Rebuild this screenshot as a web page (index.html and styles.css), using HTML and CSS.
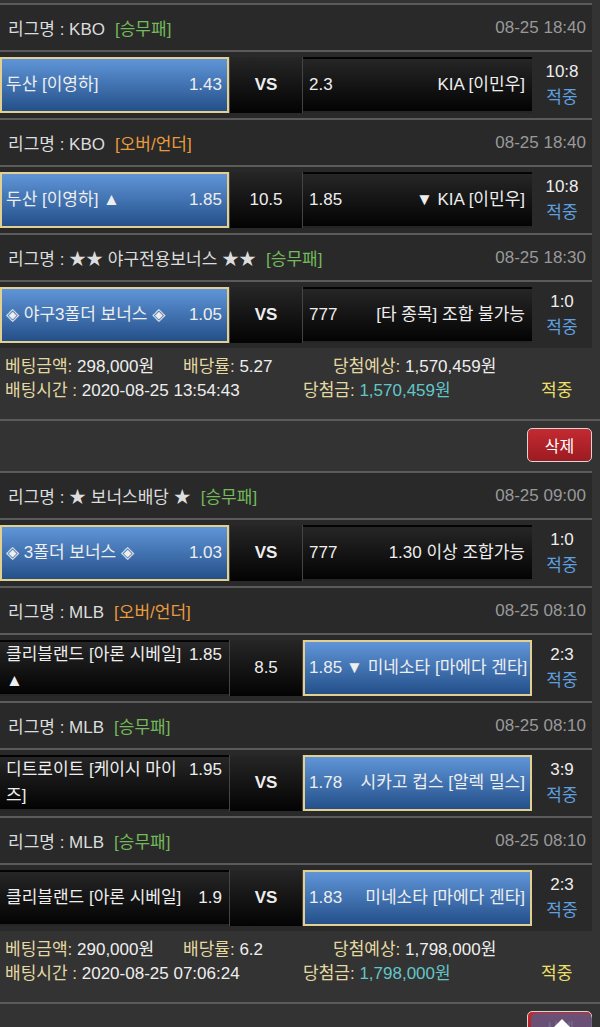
FILE: index.html
```html
<!DOCTYPE html>
<html lang="ko">
<head>
    <meta charset="UTF-8">
    <meta name="viewport" content="width=device-width, initial-scale=1.0">
    <title>베팅내역</title>
    <link rel="stylesheet" href="styles.css">
</head>
<body>
<div class="page">

    <!-- 첫번째 베팅 -->
    <div class="games">
        <div class="league">
            <span>리그명 : KBO<em class="type win">[승무패]</em></span>
            <span class="date">08-25 18:40</span>
        </div>
        <div class="match">
            <div class="pick home on"><div class="line"><span class="name">두산 [이영하]</span><span class="odd">1.43</span></div></div>
            <div class="mid vs">VS</div>
            <div class="pick away"><div class="line"><span class="odd">2.3</span><span class="name">KIA [이민우]</span></div></div>
            <div class="result"><span>10:8</span><span class="hit">적중</span></div>
        </div>

        <div class="league">
            <span>리그명 : KBO<em class="type ou">[오버/언더]</em></span>
            <span class="date">08-25 18:40</span>
        </div>
        <div class="match">
            <div class="pick home on"><div class="line"><span class="name">두산 [이영하] ▲</span><span class="odd">1.85</span></div></div>
            <div class="mid">10.5</div>
            <div class="pick away"><div class="line"><span class="odd">1.85</span><span class="name">▼ KIA [이민우]</span></div></div>
            <div class="result"><span>10:8</span><span class="hit">적중</span></div>
        </div>

        <div class="league">
            <span>리그명 : ★★ 야구전용보너스 ★★<em class="type win">[승무패]</em></span>
            <span class="date">08-25 18:30</span>
        </div>
        <div class="match">
            <div class="pick home on"><div class="line"><span class="name">◈ 야구3폴더 보너스 ◈</span><span class="odd">1.05</span></div></div>
            <div class="mid vs">VS</div>
            <div class="pick away"><div class="line"><span class="odd">777</span><span class="name">[타 종목] 조합 불가능</span></div></div>
            <div class="result"><span>1:0</span><span class="hit">적중</span></div>
        </div>
    </div>

    <div class="summary">
        <div class="sum-row">
            <span class="c1"><span class="label">베팅금액:</span> 298,000원</span>
            <span class="c2"><span class="label">배당률:</span> 5.27</span>
            <span><span class="label">당첨예상:</span> 1,570,459원</span>
        </div>
        <div class="sum-row">
            <span class="w1"><span class="label">배팅시간 :</span> 2020-08-25 13:54:43</span>
            <span class="w2"><span class="label">당첨금:</span> <span class="won">1,570,459원</span></span>
            <span class="sum-hit">적중</span>
        </div>
    </div>
    <div class="tools">
        <button class="del">삭제</button>
    </div>

    <!-- 두번째 베팅 -->
    <div class="games">
        <div class="league">
            <span>리그명 : ★ 보너스배당 ★<em class="type win">[승무패]</em></span>
            <span class="date">08-25 09:00</span>
        </div>
        <div class="match">
            <div class="pick home on"><div class="line"><span class="name">◈ 3폴더 보너스 ◈</span><span class="odd">1.03</span></div></div>
            <div class="mid vs">VS</div>
            <div class="pick away"><div class="line"><span class="odd">777</span><span class="name">1.30 이상 조합가능</span></div></div>
            <div class="result"><span>1:0</span><span class="hit">적중</span></div>
        </div>

        <div class="league">
            <span>리그명 : MLB<em class="type ou">[오버/언더]</em></span>
            <span class="date">08-25 08:10</span>
        </div>
        <div class="match">
            <div class="pick home"><div class="line"><span class="name">클리블랜드 [아론 시베일]<br>▲</span><span class="odd">1.85</span></div></div>
            <div class="mid">8.5</div>
            <div class="pick away on"><div class="line"><span class="odd">1.85</span><span class="name">▼ 미네소타 [마에다 겐타]</span></div></div>
            <div class="result"><span>2:3</span><span class="hit">적중</span></div>
        </div>

        <div class="league">
            <span>리그명 : MLB<em class="type win">[승무패]</em></span>
            <span class="date">08-25 08:10</span>
        </div>
        <div class="match">
            <div class="pick home"><div class="line"><span class="name">디트로이트 [케이시 마이<br>즈]</span><span class="odd">1.95</span></div></div>
            <div class="mid vs">VS</div>
            <div class="pick away on"><div class="line"><span class="odd">1.78</span><span class="name">시카고 컵스 [알렉 밀스]</span></div></div>
            <div class="result"><span>3:9</span><span class="hit">적중</span></div>
        </div>

        <div class="league">
            <span>리그명 : MLB<em class="type win">[승무패]</em></span>
            <span class="date">08-25 08:10</span>
        </div>
        <div class="match">
            <div class="pick home"><div class="line"><span class="name">클리블랜드 [아론 시베일]</span><span class="odd">1.9</span></div></div>
            <div class="mid vs">VS</div>
            <div class="pick away on"><div class="line"><span class="odd">1.83</span><span class="name">미네소타 [마에다 겐타]</span></div></div>
            <div class="result"><span>2:3</span><span class="hit">적중</span></div>
        </div>
    </div>

    <div class="summary">
        <div class="sum-row">
            <span class="c1"><span class="label">베팅금액:</span> 290,000원</span>
            <span class="c2"><span class="label">배당률:</span> 6.2</span>
            <span><span class="label">당첨예상:</span> 1,798,000원</span>
        </div>
        <div class="sum-row">
            <span class="w1"><span class="label">배팅시간 :</span> 2020-08-25 07:06:24</span>
            <span class="w2"><span class="label">당첨금:</span> <span class="won">1,798,000원</span></span>
            <span class="sum-hit">적중</span>
        </div>
    </div>
    <div class="tools">
        <button class="del">삭제</button>
        <!-- 맨 위로 버튼 -->
        <a class="to-top" href="#">
            <svg width="22" height="16" viewBox="0 0 22 16"><path d="M11 1 L21 11 L16 11 L16 16 L6 16 L6 11 L1 11 Z" fill="#fff"/></svg>
        </a>
    </div>
</div>
</body>
</html>
```

FILE: styles.css
```css
body {
    margin: 0;
    background-color: #333;
    font-family: "Liberation Sans", "Noto Sans CJK KR", "DejaVu Sans", sans-serif;
    font-size: 17px;
    color: #eee;
}
.page {
    padding-top: 3px;
}
.games {
    width: 592px;
    background-color: #292929;
}
.league {
    display: flex;
    justify-content: space-between;
    align-items: center;
    height: 45px;
    border-top: 2px solid #5b5b5b;
    padding: 0 6px 0 8px;
    color: #ddd;
}
.date {
    color: #999;
}
.type {
    font-style: normal;
    margin-left: 10px;
}
.type.win {
    color: #74b95b;
}
.type.ou {
    color: #e99b3d;
}
.match {
    display: grid;
    grid-template-columns: 229px 74px 229px 1fr;
    height: 56px;
    padding: 5px 0;
    border-top: 2px solid #5b5b5b;
}
.pick {
    display: flex;
    align-items: center;
    box-sizing: border-box;
    padding: 0 5px 0 4px;
    border: 2px solid transparent;
    background: linear-gradient(#262626, #030303);
    line-height: 26px;
}
.pick.on {
    background: linear-gradient(#5f95d8, #24508a);
    border-color: #e3d08e;
}
.line {
    display: flex;
    align-items: flex-start;
    width: 100%;
}
.name {
    flex: 1;
}
.odd {
    margin-left: 6px;
}
.away .name {
    text-align: right;
    white-space: nowrap;
}
.away .odd {
    margin: 0 4px 0 0;
}
.mid {
    display: flex;
    align-items: center;
    justify-content: center;
    background: linear-gradient(#262626, #030303);
    border-left: 1px solid #444;
    border-right: 1px solid #444;
}
.vs {
    font-weight: bold;
}
.result {
    display: flex;
    flex-direction: column;
    align-items: center;
    justify-content: center;
    line-height: 26px;
}
.hit {
    color: #5fa0e0;
}
.summary {
    padding: 7px 0 16px 5px;
    line-height: 24px;
}
.sum-row {
    display: flex;
    white-space: nowrap;
}
.label {
    color: #e4d9a2;
}
.c1 {
    width: 178px;
}
.c2 {
    width: 150px;
}
.w1 {
    width: 298px;
}
.w2 {
    width: 238px;
}
.won {
    color: #62c6c8;
}
.sum-hit {
    color: #efe06a;
}
.tools {
    position: relative;
    display: flex;
    justify-content: flex-end;
    align-items: flex-start;
    height: 50px;
    padding-right: 8px;
    border-top: 2px solid #5b5b5b;
}
.del {
    margin-top: 7px;
    width: 65px;
    height: 34px;
    border: 1px solid #d6d6d6;
    border-radius: 5px;
    background: linear-gradient(#c42a31, #9c1b21);
    color: #fff;
    font-family: inherit;
    font-size: 16px;
}
.to-top {
    position: absolute;
    top: 9px;
    right: 8px;
    width: 61px;
    height: 44px;
    border-radius: 6px;
    background: rgba(96, 86, 128, 0.88);
    display: flex;
    justify-content: center;
    padding-top: 5px;
    box-sizing: border-box;
}
```
